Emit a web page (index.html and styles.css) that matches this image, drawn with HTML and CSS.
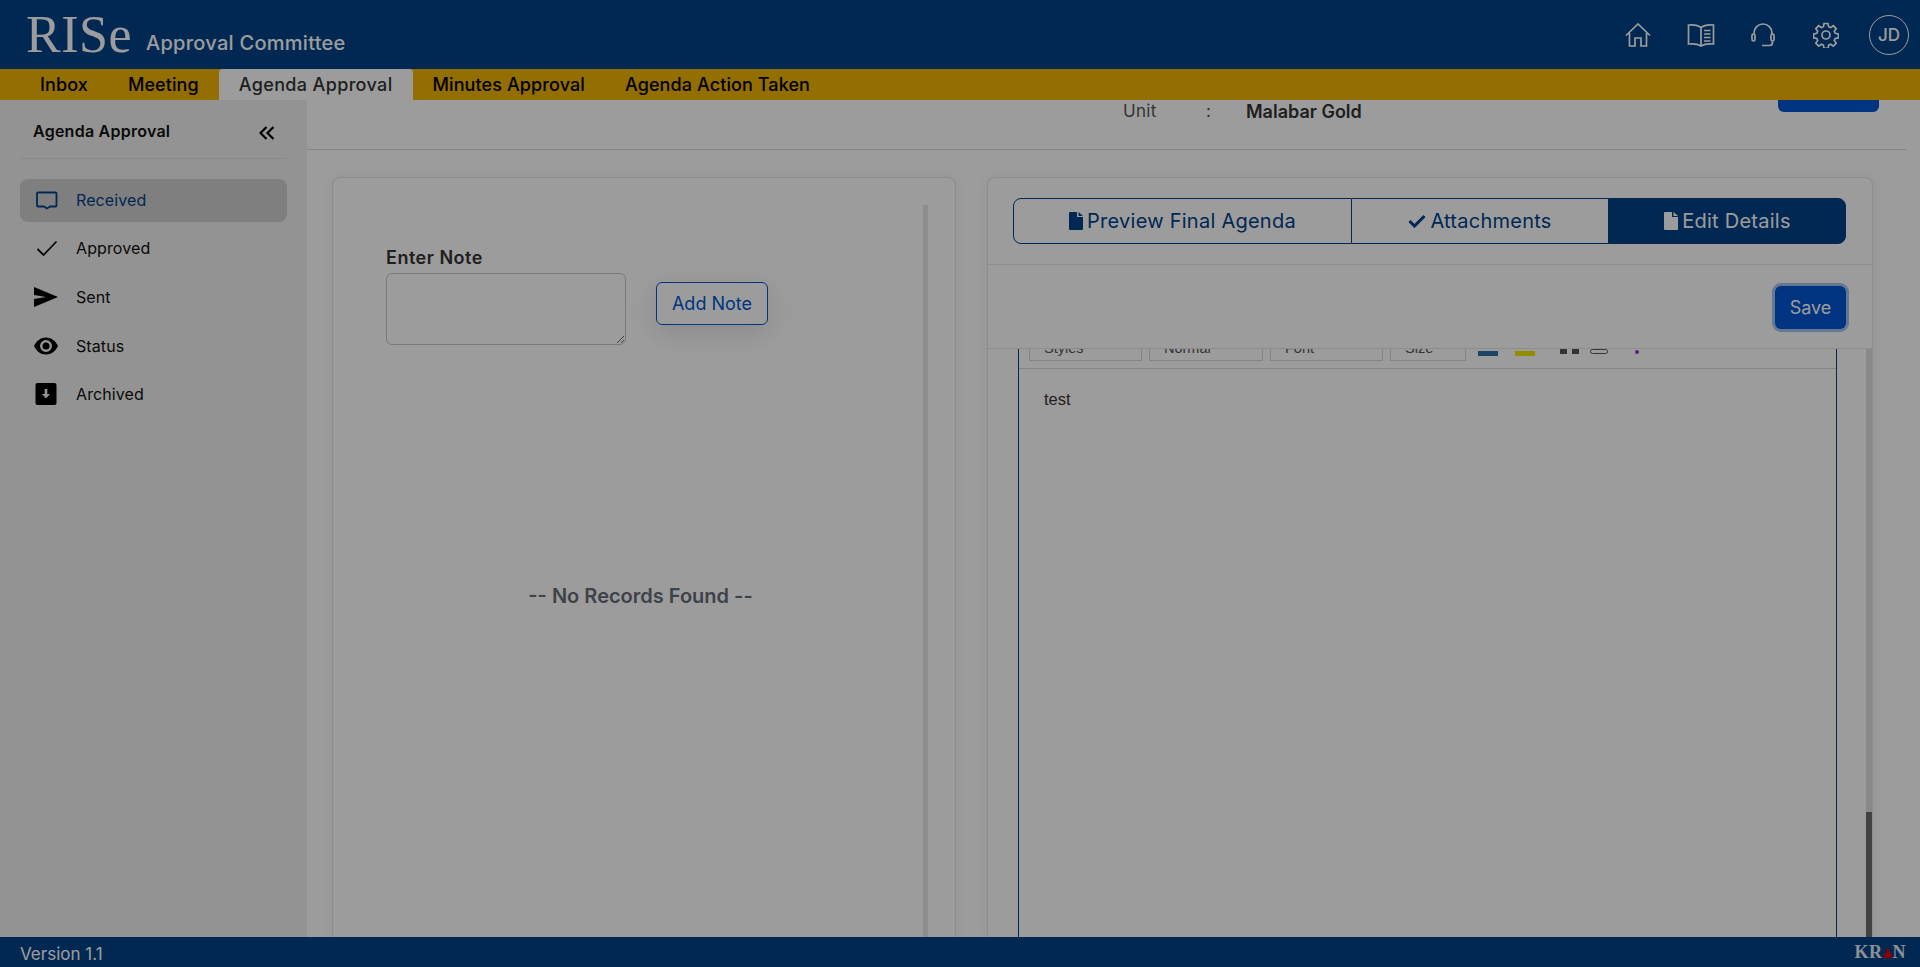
FILE: index.html
```html
<!DOCTYPE html>
<html lang="en">
<head>
    <meta charset="UTF-8">
    <meta name="viewport" content="width=device-width, initial-scale=1.0">
    <title>RISe Approval Committee</title>
    <link rel="stylesheet" href="styles.css">
</head>
<body>
    <div class="app">
        <header class="topbar">
            <div class="brand">
                <span class="brand-logo">RISe</span>
                <span class="brand-name">Approval Committee</span>
            </div>
            <div class="top-icons">
                <svg class="top-icon home" viewBox="0 0 26 24"><path d="M1 12.500 13 1l12 11.500M4.500 10v13H10v-8h6v8h5.500V10"/></svg>
                <svg class="top-icon book" viewBox="0 0 28 24"><path d="M14 4.500C11 2 6 1.500 1.500 2v19c4.500-.5 9.500 0 12.500 2 3-2 8-2.500 12.500-2V2C22 1.500 17 2 14 4.500zM14 4.500V23M17 7.500h6.500M17 11h6.500M17 14.500h6.500M17 18h6.500"/></svg>
                <svg class="top-icon headset" viewBox="0 0 24 24"><path d="M3 12V10a9 9 0 0 1 18 0v2M1 12.500a1.500 1.500 0 0 1 3 0v4a1.500 1.500 0 0 1-3 0zM20 12.500a1.500 1.500 0 0 1 3 0v4a1.500 1.500 0 0 1-3 0zM21.500 18v1.500a3 3 0 0 1-3 3H11"/></svg>
                <svg class="top-icon gear" viewBox="0 0 26 26"><circle cx="13" cy="13" r="4"/><path d="M11 1.500h4l.6 3.200 2 .9 2.700-1.900 2.900 2.900-1.900 2.700.9 2 3.200.6v4l-3.200.6-.9 2 1.900 2.700-2.900 2.900-2.700-1.900-2 .9-.6 3.200h-4l-.6-3.200-2-.9-2.700 1.900-2.900-2.900 1.900-2.700-.9-2-3.200-.6v-4l3.200-.6.9-2-1.900-2.700 2.900-2.900 2.700 1.900 2-.9z"/></svg>
                <div class="avatar">JD</div>
            </div>
        </header>

        <nav class="menu">
            <a class="menu-item inbox">Inbox</a>
            <a class="menu-item">Meeting</a>
            <a class="menu-item active">Agenda Approval</a>
            <a class="menu-item">Minutes Approval</a>
            <a class="menu-item">Agenda Action Taken</a>
        </nav>

        <div class="content">
            <aside class="sidebar">
                <div class="side-head">
                    <span class="side-title">Agenda Approval</span>
                    <svg class="collapse" viewBox="0 0 16 14"><path d="M7.500 1 1.500 7l6 6M14.500 1l-6 6 6 6"/></svg>
                </div>
                <ul class="side-list">
                    <li class="side-item current">
                        <svg class="side-icon" viewBox="0 0 24 22"><path class="line" d="M4 3.500h17.500a1 1 0 0 1 1 1v12a1 1 0 0 1-1 1H16l-3 2-3-2H4a1 1 0 0 1-1-1v-12a1 1 0 0 1 1-1z"/></svg>
                        Received
                    </li>
                    <li class="side-item">
                        <svg class="side-icon" viewBox="0 0 24 22"><path class="line" d="m3.500 12 6 6L22.500 4.500"/></svg>
                        Approved
                    </li>
                    <li class="side-item">
                        <svg class="side-icon" viewBox="0 0 24 20"><path d="M0 0l24 10L0 20l0-8 12-2L0 8z"/></svg>
                        Sent
                    </li>
                    <li class="side-item">
                        <svg class="side-icon" viewBox="0 0 24 20"><path fill-rule="evenodd" d="M12 1.500C6.500 1.500 2.500 5 0 10c2.500 5 6.500 8.500 12 8.500S21.500 15 24 10c-2.500-5-6.500-8.500-12-8.500zM12 4a6 6 0 1 1 0 12 6 6 0 0 1 0-12zm0 2.500a3.500 3.500 0 1 0 0 7 3.500 3.500 0 0 0 0-7z"/></svg>
                        Status
                    </li>
                    <li class="side-item">
                        <svg class="side-icon" viewBox="0 0 22 22"><path fill-rule="evenodd" d="M2.500 0h17A2 2 0 0 1 21.500 2v18a2 2 0 0 1-2 2h-17a2 2 0 0 1-2-2V2a2 2 0 0 1 2-2zM9.700 6v5H7l4 4.500 4-4.500h-2.700V6z"/></svg>
                        Archived
                    </li>
                </ul>
            </aside>

            <main class="main">
                <div class="unit-bar">
                    <span class="unit-label">Unit</span>
                    <span class="unit-colon">:</span>
                    <span class="unit-value">Malabar Gold</span>
                    <button class="unit-btn"></button>
                </div>

                <div class="cards">
                    <section class="card note-card">
                        <div class="note-body">
                            <div class="note-form">
                                <div class="note-field">
                                    <label class="note-label" for="note">Enter Note</label>
                                    <textarea class="note-input" id="note"></textarea>
                                </div>
                                <button class="add-note">Add Note</button>
                            </div>
                            <p class="no-records">-- No Records Found --</p>
                        </div>
                        <div class="note-scroll"></div>
                    </section>

                    <section class="card edit-card">
                        <div class="tabs">
                            <button class="tab tab-preview">
                                <svg class="tab-icon" viewBox="0 0 14 18"><path d="M0 1a1 1 0 0 1 1-1h7v5h6v12a1 1 0 0 1-1 1H1a1 1 0 0 1-1-1zM9.500 0 14 4H9.500z"/></svg>
                                Preview Final Agenda
                            </button>
                            <button class="tab tab-attach">
                                <svg class="tab-icon check" viewBox="0 0 18 14"><path d="m1.500 7 5 5L16.500 2"/></svg>
                                Attachments
                            </button>
                            <button class="tab tab-edit">
                                <svg class="tab-icon" viewBox="0 0 14 18"><path d="M0 1a1 1 0 0 1 1-1h7v5h6v12a1 1 0 0 1-1 1H1a1 1 0 0 1-1-1zM9.500 0 14 4H9.500z"/></svg>
                                Edit Details
                            </button>
                        </div>
                        <div class="save-row">
                            <button class="save-btn">Save</button>
                        </div>
                        <div class="editor-row">
                            <div class="editor">
                                <div class="toolbar">
                                    <span class="tool-select styles">Styles</span>
                                    <span class="tool-select normal">Normal</span>
                                    <span class="tool-select font">Font</span>
                                    <span class="tool-select size">Size</span>
                                    <span class="tool-color blue"></span>
                                    <span class="tool-color yellow"></span>
                                    <span class="tool-mark first"></span>
                                    <span class="tool-mark"></span>
                                    <span class="tool-oval"></span>
                                    <span class="tool-dot"></span>
                                </div>
                                <div class="editor-text">test</div>
                            </div>
                            <div class="editor-scroll"><div class="editor-thumb"></div></div>
                        </div>
                    </section>
                </div>
            </main>
            <div class="page-scroll"></div>
        </div>

        <footer class="footer">
            <span class="version">Version 1.1</span>
            <span class="kran">KR<span class="kran-a"></span>N</span>
        </footer>
    </div>
    <div class="backdrop"></div>
</body>
</html>
```
FILE: styles.css
```css
* {
    box-sizing: border-box;
}
html, body {
    height: 100%;
    margin: 0;
    overflow: hidden;
}
body {
    font-family: Inter, "Open Sans", sans-serif;
    color: #111;
    background: #fff;
}
button {
    font-family: inherit;
}
.backdrop {
    position: fixed;
    inset: 0;
    background: rgba(0, 0, 0, 0.39);
}
.app {
    display: flex;
    flex-direction: column;
    height: 100vh;
}

/* top bar */
.topbar {
    flex: 0 0 69px;
    display: flex;
    align-items: center;
    justify-content: space-between;
    padding: 0 11px 0 26px;
    background: #004288;
}
.brand {
    display: flex;
    align-items: baseline;
    gap: 14px;
}
.brand-logo {
    font-family: "Liberation Serif", serif;
    font-size: 52px;
    letter-spacing: 0.5px;
    line-height: 1;
    color: #fff;
}
.brand-name {
    position: relative;
    top: -2px;
    font-size: 20px;
    font-weight: 500;
    letter-spacing: 0.27px;
    color: #fff;
}
.top-icons {
    display: flex;
    align-items: center;
}
.top-icon {
    fill: none;
    stroke: #fff;
    stroke-width: 1.7;
}
.home {
    width: 26px;
    height: 24px;
}
.book {
    width: 28px;
    height: 24px;
    margin-left: 36px;
}
.headset {
    width: 24px;
    height: 24px;
    margin-left: 36px;
}
.gear {
    width: 26px;
    height: 26px;
    margin-left: 38px;
}
.avatar {
    width: 40px;
    height: 40px;
    margin-left: 30px;
    border: 1px solid #fff;
    border-radius: 50%;
    display: flex;
    align-items: center;
    justify-content: center;
    color: #fff;
    font-size: 17px;
    font-weight: 500;
}

/* yellow menu */
.menu {
    flex: 0 0 31px;
    display: flex;
    background: #f0b400;
}
.menu-item {
    display: flex;
    align-items: center;
    padding: 0 20px;
    font-size: 18px;
    font-weight: 500;
    letter-spacing: 0.1px;
    color: #000;
}
.menu-item.inbox {
    margin-left: 20px;
}
.menu-item.active {
    background: #fff;
    border-radius: 4px 4px 0 0;
    color: #333;
    letter-spacing: 0.35px;
}

.content {
    flex: 1;
    display: flex;
    min-height: 0;
    overflow: hidden;
}

/* left sidebar */
.sidebar {
    flex: 0 0 307px;
    padding: 0 20px;
    background: #f0f0f0;
}
.side-head {
    height: 59px;
    display: flex;
    align-items: center;
    justify-content: space-between;
    padding: 3px 12px 0 13px;
    border-bottom: 1px solid #e2e2e2;
}
.side-title {
    font-size: 16px;
    font-weight: 600;
    letter-spacing: 0.25px;
}
.collapse {
    width: 16px;
    height: 14px;
    fill: none;
    stroke: #000;
    stroke-width: 2.2;
    margin-top: 4px;
}
.side-list {
    list-style: none;
    margin: 20px 0 0;
    padding: 0;
}
.side-item {
    height: 43px;
    margin-bottom: 5.7px;
    display: flex;
    align-items: center;
    padding: 0 0 2px 14px;
    border-radius: 8px;
    font-size: 16px;
    letter-spacing: 0.1px;
    color: #111;
}
.side-item.current {
    background: #d0d0d0;
    color: #004288;
}
.side-icon {
    width: 24px;
    height: 22px;
    margin-right: 18px;
    fill: #000;
}
.side-icon .line {
    fill: none;
    stroke: currentColor;
    stroke-width: 1.8;
}

/* main area */
.main {
    flex: 1;
    min-width: 0;
    display: flex;
    flex-direction: column;
}
.unit-bar {
    flex: 0 0 50px;
    display: flex;
    align-items: flex-start;
    border-bottom: 1px solid #d8d8d8;
    font-size: 17px;
    color: #555;
}
.unit-label {
    margin: 1px 0 0 816px;
    width: 83px;
    letter-spacing: 0.3px;
}
.unit-colon {
    margin-top: 1px;
    width: 40px;
}
.unit-value {
    font-size: 18px;
    font-weight: 600;
    margin-top: 1px;
    width: 532px;
    color: #333;
}
.unit-btn {
    width: 101px;
    height: 12px;
    border: 0;
    border-radius: 0 0 6px 6px;
    background: #0056d2;
}
.cards {
    flex: 1;
    min-height: 0;
    display: flex;
    gap: 31px;
    padding: 27px 0 0 25px;
}
.card {
    border: 1px solid #e6e6e6;
    border-bottom: 0;
    border-radius: 8px 8px 0 0;
    box-shadow: 0 0 14px rgba(0, 0, 0, 0.06);
    background: #fff;
}

/* note card */
.note-card {
    flex: 0 0 624px;
    display: flex;
}
.note-body {
    flex: 1;
    padding: 68px 0 0 53px;
}
.note-form {
    display: flex;
    align-items: flex-end;
}
.note-label {
    display: block;
    height: 24px;
    margin-bottom: 3px;
    font-size: 18px;
    font-weight: 600;
    letter-spacing: 0.5px;
    line-height: 24px;
    color: #333;
}
.note-input {
    display: block;
    width: 240px;
    height: 72px;
    border: 1px solid #c4c8cc;
    border-radius: 6px;
    background: #fff;
}
.add-note {
    width: 112px;
    height: 43px;
    margin: 0 0 20px 30px;
    border: 1px solid #0056d2;
    border-radius: 6px;
    background: #fff;
    box-shadow: 0 8px 30px rgba(0, 0, 0, 0.12);
    color: #0056d2;
    font-size: 18px;
}
.no-records {
    margin: 239px 0 0;
    padding-right: 28px;
    text-align: center;
    font-size: 20px;
    font-weight: 600;
    color: #666e78;
}
.note-scroll {
    flex: 0 0 5px;
    margin: 27px 27px 0 0;
    background: #e6e6e6;
}

/* editor card */
.edit-card {
    flex: 0 0 886px;
    display: flex;
    flex-direction: column;
}
.tabs {
    flex: 0 0 87px;
    display: flex;
    padding: 20px 26px 20px 25px;
    border-bottom: 1px solid #e6e6e6;
}
.tab {
    display: flex;
    align-items: center;
    justify-content: center;
    gap: 4px;
    border: 1px solid #004288;
    background: #fff;
    color: #004288;
    font-size: 20px;
    letter-spacing: 0.25px;
}
.tab-preview {
    width: 339px;
    border-radius: 8px 0 0 8px;
}
.tab-attach {
    width: 257px;
    border-left: 0;
}
.tab-edit {
    width: 237px;
    border-radius: 0 8px 8px 0;
    background: #004288;
    color: #fff;
}
.tab-icon {
    width: 14px;
    height: 18px;
    fill: currentColor;
}
.tab-icon.check {
    width: 18px;
    height: 14px;
    fill: none;
    stroke: currentColor;
    stroke-width: 3;
}
.save-row {
    flex: 0 0 84px;
    display: flex;
    justify-content: flex-end;
    align-items: flex-start;
    padding: 21px 26px 0 0;
    border-bottom: 1px solid #e6e6e6;
}
.save-btn {
    width: 71px;
    height: 43px;
    border: 0;
    border-radius: 6px;
    background: #0056d2;
    box-shadow: 0 0 0 3px rgba(0, 86, 210, 0.35);
    color: #fff;
    font-size: 18px;
}
.editor-row {
    flex: 1;
    min-height: 0;
    display: flex;
    justify-content: space-between;
    padding-left: 30px;
}
.editor {
    width: 819px;
    border-left: 1px solid #004288;
    border-right: 1px solid #004288;
}
.toolbar {
    height: 20px;
    overflow: hidden;
    display: flex;
    align-items: flex-end;
    padding-left: 10px;
    border-bottom: 1px solid #d8d8d8;
}
.tool-select {
    height: 30px;
    margin: 0 7px 7px 0;
    padding: 8px 0 0 14px;
    border: 1px solid #d8d8d8;
    font: 14.500px "Liberation Sans", sans-serif;
    color: #555;
    flex: none;
}
.styles { width: 113px; }
.normal { width: 114px; }
.font { width: 113px; }
.size { width: 76px; margin-right: 12px; }
.tool-color {
    width: 20px;
    height: 5px;
    margin-bottom: 12px;
    margin-right: 17px;
    flex: none;
}
.blue { background: #2f6ea5; }
.yellow { background: #f0e800; margin-right: 25px; }
.tool-mark {
    width: 7px;
    height: 5px;
    margin: 0 5px 14px 0;
    background: #555;
    flex: none;
}
.tool-oval {
    width: 18px;
    height: 5px;
    margin: 0 0 14px 6px;
    border: 1px solid #555;
    border-radius: 3px;
    flex: none;
}
.tool-dot {
    width: 4px;
    height: 4px;
    margin: 0 0 14px 27px;
    border-radius: 50%;
    background: #9b30d0;
    flex: none;
}
.editor-text {
    padding: 21px 0 0 25px;
    font: 16.500px "Liberation Sans", sans-serif;
    color: #333;
}
.editor-scroll {
    flex: 0 0 6px;
    display: flex;
    flex-direction: column;
    justify-content: flex-end;
    background: #e0e0e0;
}
.editor-thumb {
    height: 125px;
    background: #6b6b6b;
}
.page-scroll {
    flex: 0 0 14px;
    background: #fff;
}

/* footer */
.footer {
    flex: 0 0 30px;
    display: flex;
    align-items: center;
    justify-content: space-between;
    padding: 4px 14px 0 20px;
    background: #004288;
    color: #fff;
}
.version {
    font-size: 17px;
}
.kran {
    display: flex;
    align-items: flex-end;
    margin-top: -4px;
    font-family: "Liberation Serif", serif;
    font-size: 18px;
    letter-spacing: 0.5px;
    line-height: 13px;
    font-weight: bold;
    color: #e6ecf2;
}
.kran-a {
    width: 0;
    height: 0;
    margin-bottom: 1px;
    border-left: 5.500px solid transparent;
    border-right: 5.500px solid transparent;
    border-bottom: 11px solid #d80000;
}
```
